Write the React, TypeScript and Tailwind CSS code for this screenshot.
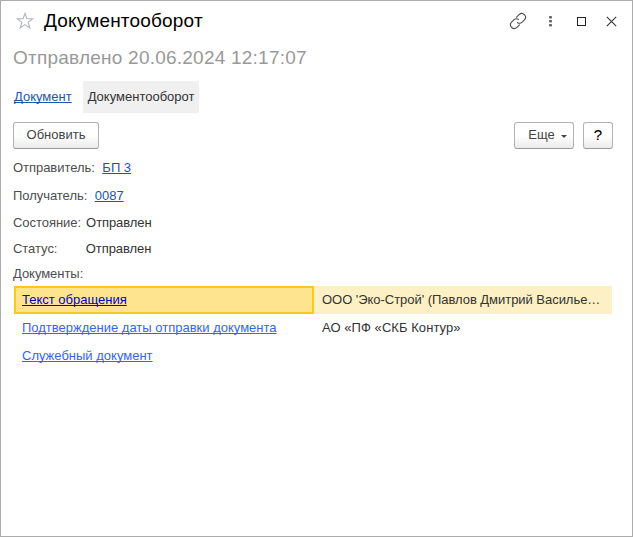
import type { ReactNode } from "react";

const linkCls = "underline underline-offset-1 decoration-1 [text-decoration-skip-ink:none]";

function Field({ label, className, children }: { label: string; className: string; children?: ReactNode }) {
  return (
    <div className={`flex items-center ${className}`}>
      <span className="tracking-[-0.04px] text-[#4d4d4d]">{label}</span>
      {children}
    </div>
  );
}

const buttonCls =
  "flex h-[27px] items-center justify-center rounded-[3px] border border-[#b3b3b3] border-b-[#9c9c9c] bg-linear-to-b from-white from-50% to-[#ebebeb] pb-[2px] text-[#444]";

export default function App() {
  return (
    <div className="flex h-[537px] w-[633px] flex-col overflow-hidden border border-[#acacac] bg-white pl-3 font-['Liberation_Sans',Arial,sans-serif] text-[13px] leading-4 whitespace-nowrap text-[#333]">
      <header className="flex h-10 shrink-0 items-center">
        <svg className="ml-[3px] shrink-0" width="18" height="18" viewBox="0 0 18 18" fill="none" stroke="#b0b7bf" strokeWidth="1.1">
          <path d="M9 1.3 10.9 6.8H16.7L12.1 10.4 13.8 15.9 9 12.6 4.2 15.9 5.9 10.4 1.3 6.8H7.1Z" />
        </svg>
        <h1 className="ml-[10px] text-[19px] leading-6 tracking-[0.18px] text-black">Документооборот</h1>
        <div className="mr-[15px] ml-auto flex items-center">
          <svg className="-mt-px" width="18" height="18" viewBox="0 0 24 24" fill="none" stroke="#4d4d4d" strokeWidth="1.5" strokeLinecap="round">
            <path d="M11.5 14.2a5 5 0 0 0 6.04-.66l3-3a5 5 0 0 0-7.07-7.07l-3.4 3.4" />
            <path d="M12.5 9.8a5 5 0 0 0-6.04.66l-3 3a5 5 0 0 0 7.07 7.07l3.4-3.4" />
          </svg>
          <svg className="ml-[21px]" width="5" height="12" fill="#666">
            <rect x="1" y="1" width="3" height="2.6" rx=".8" />
            <rect x="1" y="5" width="3" height="2.6" rx=".8" />
            <rect x="1" y="9" width="3" height="2.6" rx=".8" />
          </svg>
          <span className="ml-6 size-[9px] border border-[#222]" />
          <svg className="ml-5" width="11" height="11" stroke="#333" strokeWidth="1.1">
            <path d="M.8.8 10.2 10.2M10.2.8.8 10.2" />
          </svg>
        </div>
      </header>

      <h2 className="h-10 shrink-0 pt-[5px] text-[19px] leading-6 tracking-[0.23px] text-[#999]">Отправлено 20.06.2024 12:17:07</h2>

      <nav className="flex h-8 shrink-0 items-center">
        <a className={`ml-px text-[#1a56b0] ${linkCls}`}>Документ</a>
        <span className="ml-[11px] flex h-8 w-[116px] items-center bg-[#f0f0f0] pl-[5px]">Документооборот</span>
      </nav>

      <div className="mt-[9px] mr-[19px] flex shrink-0">
        <button className={`w-[86px] ${buttonCls}`}>Обновить</button>
        <button className={`ml-auto w-[60px] gap-[6px] pl-[7px] ${buttonCls}`}>
          Еще
          <svg className="mt-[3px]" width="6" height="3" fill="#444">
            <path d="M0 0H6L3 3Z" />
          </svg>
        </button>
        <button className={`ml-[9px] w-[30px] ${buttonCls}`}>
          <span className="text-[15px] text-black [-webkit-text-stroke:0.15px_black]">?</span>
        </button>
      </div>

      <Field label="Отправитель:" className="mt-[11px]">
        <a className={`ml-[7.5px] text-[#1a56b0] ${linkCls}`}>БП 3</a>
      </Field>
      <Field label="Получатель:" className="mt-3">
        <a className={`ml-[7.5px] text-[#1a56b0] ${linkCls}`}>0087</a>
      </Field>
      <Field label="Состояние:" className="mt-[11px]">
        <span className="ml-[5px] tracking-[-0.08px]">Отправлен</span>
      </Field>
      <Field label="Статус:" className="mt-[10px]">
        <span className="ml-[28.4px] tracking-[-0.08px]">Отправлен</span>
      </Field>
      <Field label="Документы:" className="mt-[9px]" />

      <div className="mt-[4px] mr-[20px] ml-px grid shrink-0 grid-cols-[300px_1fr] auto-rows-[28px]">
        <div className="flex items-center border-2 border-[#fcc81e] bg-[#ffe48f] pl-[6px]">
          <a className={`text-[#0000d0] ${linkCls}`}>Текст обращения</a>
        </div>
        <div className="flex items-center bg-[#fdf0c4] pl-2 tracking-[-0.04px]">ООО 'Эко-Строй' (Павлов Дмитрий Василье…</div>
        <div className="flex items-center pl-2">
          <a className={`text-[#3366f0] ${linkCls}`}>Подтверждение даты отправки документа</a>
        </div>
        <div className="flex items-center pl-2 tracking-[0.06px]">АО «ПФ «СКБ Контур»</div>
        <div className="flex items-center pl-2">
          <a className={`text-[#3366f0] ${linkCls}`}>Служебный документ</a>
        </div>
        <div />
      </div>
    </div>
  );
}
